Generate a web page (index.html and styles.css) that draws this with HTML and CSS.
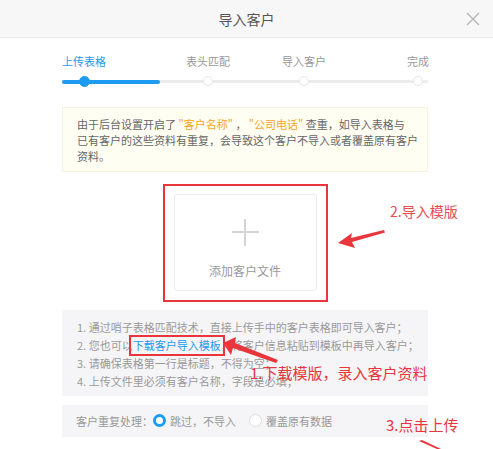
FILE: index.html
```html
<!DOCTYPE html>
<html lang="zh-CN">
<head>
  <meta charset="UTF-8" />
  <meta name="viewport" content="width=device-width, initial-scale=1.0"/>
  <title>导入客户</title>
  <link rel="stylesheet" href="styles.css">
</head>
<body>

<div class="dialog">
  <!-- Header -->
  <header class="dialog-head">
    <span></span>
    <h1 class="dialog-title">导入客户</h1>
    <button class="close" aria-label="关闭">
      <svg width="14" height="14" viewBox="0 0 14 14"><path d="M1 1 L13 13 M13 1 L1 13" stroke="#b4b4b4" stroke-width="1.3" fill="none"/></svg>
    </button>
  </header>

  <main class="dialog-body">
    <!-- Steps -->
    <div class="steps">
      <div class="track"><div class="track-fill"></div></div>
      <div class="step active"><span class="step-label">上传表格</span><i class="step-dot"></i></div>
      <div class="step"><span class="step-label">表头匹配</span><i class="step-dot"></i></div>
      <div class="step"><span class="step-label">导入客户</span><i class="step-dot"></i></div>
      <div class="step"><span class="step-label">完成</span><i class="step-dot"></i></div>
    </div>

    <!-- Notice -->
    <div class="notice">
      由于后台设置开启了 <em>"客户名称"</em> ， <em>"公司电话"</em> 查重，如导入表格与<br>
      已有客户的这些资料有重复，会导致这个客户不导入或者覆盖原有客户<br>
      资料。
    </div>

    <!-- Upload -->
    <div class="upload-wrap">
      <div class="upload">
        <span class="plus"></span>
        <span class="upload-text">添加客户文件</span>
      </div>
      <div class="mark mark-upload"></div>
    </div>

    <!-- Tips -->
    <div class="tips">
      <p>1. 通过哨子表格匹配技术，直接上传手中的客户表格即可导入客户；</p>
      <p>2. 您也可以<a class="tpl-link" href="#">下载客户导入模板</a>，将客户信息粘贴到模板中再导入客户；</p>
      <p>3. 请确保表格第一行是标题，不得为空；</p>
      <p>4. 上传文件里必须有客户名称，字段是必填；</p>
    </div>

    <!-- Duplicate handling -->
    <div class="dup">
      <span class="dup-label">客户重复处理：</span>
      <label class="radio checked"><i></i>跳过，不导入</label>
      <label class="radio"><i></i>覆盖原有数据</label>
    </div>
  </main>

  <!-- Annotations -->
  <div class="note note-2">2.导入模版</div>
  <div class="note note-1">1.下载模版，录入客户资料</div>
  <div class="note note-3">3.点击上传</div>
  <svg class="arrows" width="493" height="449" viewBox="0 0 493 449">
    <polygon points="338,243 352,233 351,238 384,230 385,232.5 352,242 355,248" fill="#e8363c"/>
    <polygon points="223,343 236,337 235,343 278,360 276,363 233,348 231,355" fill="#e8363c"/>
    <polygon points="419,441 422,440 441,449 437,449" fill="#e8363c"/>
  </svg>
</div>

</body>
</html>
```

FILE: styles.css
```css
* { margin: 0; padding: 0; box-sizing: border-box; }
body {
  font-family: "Noto Sans CJK SC", "Noto Sans", sans-serif;
  background: #fff;
  color: #666;
  overflow: hidden;
}
.dialog {
  position: relative;
  width: 493px;
  height: 449px;
}

/* header */
.dialog-head {
  height: 38px;
  background: #f7f7f7;
  border-bottom: 1px solid #e9e9e9;
  display: grid;
  grid-template-columns: 1fr auto 1fr;
  align-items: center;
}
.dialog-title {
  font-size: 14px;
  font-weight: normal;
  color: #555;
  line-height: 20px;
}
.close {
  justify-self: end;
  margin-right: 13px;
  border: 0;
  background: none;
  display: flex;
}

.dialog-body {
  margin: 0 65px 0 62px;
}

/* steps */
.steps {
  position: relative;
  margin-top: 15px;
  display: grid;
  grid-template-columns: 124px 96px 114px 44px;
}
.track {
  position: absolute;
  left: 0;
  right: 0;
  top: 27px;
  height: 3px;
  background: #ececec;
}
.track-fill {
  width: 98px;
  height: 4px;
  margin-top: -0.5px;
  background: #1d9bf0;
  border-radius: 2px;
}
.step {
  position: relative;
  width: 44px;
  display: flex;
  flex-direction: column;
  align-items: center;
}
.step-label {
  font-size: 11px;
  line-height: 16px;
  color: #999;
  white-space: nowrap;
}
.step-dot {
  margin-top: 7px;
  width: 10px;
  height: 10px;
  border-radius: 50%;
  background: #fff;
  border: 1px solid #e6e6e6;
}
.step.active .step-label { color: #1d9bf0; }
.step.active .step-dot {
  width: 11px;
  height: 11px;
  margin-top: 6.5px;
  background: #1d9bf0;
  border-color: #1d9bf0;
}

/* notice */
.notice {
  margin-top: 20px;
  background: #fffef3;
  border: 1px solid #f6f3e0;
  padding: 8px 10px 7px 14px;
  font-size: 11px;
  line-height: 16px;
  color: #666;
  white-space: nowrap;
}
.notice em {
  font-style: normal;
  color: #f5a623;
}

/* upload */
.upload-wrap {
  position: relative;
  width: 143px;
  margin: 22px auto 0;
}
.upload {
  height: 97px;
  border: 1px solid #ececec;
  border-radius: 3px;
  display: flex;
  flex-direction: column;
  align-items: center;
}
.plus {
  position: relative;
  width: 27px;
  height: 27px;
  margin-top: 24px;
}
.plus::before,
.plus::after {
  content: "";
  position: absolute;
  background: #d4d4d4;
}
.plus::before { left: 0; right: 0; top: 12.5px; height: 2px; }
.plus::after { top: 0; bottom: 0; left: 12.5px; width: 2px; }
.upload-text {
  margin-top: 17px;
  font-size: 12px;
  line-height: 16px;
  color: #999;
}
.mark {
  position: absolute;
  border: 2px solid #e8363c;
  pointer-events: none;
}
.mark-upload {
  left: -11px;
  top: -10px;
  right: -11px;
  bottom: -11px;
}

/* tips */
.tips {
  margin-top: 19px;
  background: #f5f5f7;
  padding: 8px 10px 6px 15px;
  font-size: 11px;
  line-height: 18px;
  color: #9a9a9a;
  white-space: nowrap;
}
.tpl-link {
  position: relative;
  color: #1d9bf0;
  text-decoration: none;
}
.tpl-link::after {
  content: "";
  position: absolute;
  left: -4px;
  right: -4px;
  top: -2px;
  bottom: -3px;
  border: 2px solid #e8363c;
}

/* duplicate handling */
.dup {
  margin-top: 9px;
  height: 32px;
  background: #f5f5f7;
  padding: 0 14px;
  display: flex;
  align-items: center;
  font-size: 11px;
  color: #999;
}
.radio {
  display: flex;
  align-items: center;
  margin-left: 0;
}
.radio i {
  width: 13px;
  height: 13px;
  border-radius: 50%;
  background: #fff;
  border: 1px solid #dcdcdc;
  margin-right: 4px;
}
.radio.checked i {
  border: 3px solid #1d9bf0;
}
.radio + .radio { margin-left: 13px; }

/* annotations */
.note {
  position: absolute;
  color: #e8363c;
  font-size: 15px;
  line-height: 20px;
  white-space: nowrap;
}
.note-2 { left: 390px; top: 201px; font-size: 14px; color: #ea4a50; }
.note-1 { left: 250px; top: 363px; }
.note-3 { left: 386px; top: 415px; }
.arrows {
  position: absolute;
  left: 0;
  top: 0;
  pointer-events: none;
}
```
